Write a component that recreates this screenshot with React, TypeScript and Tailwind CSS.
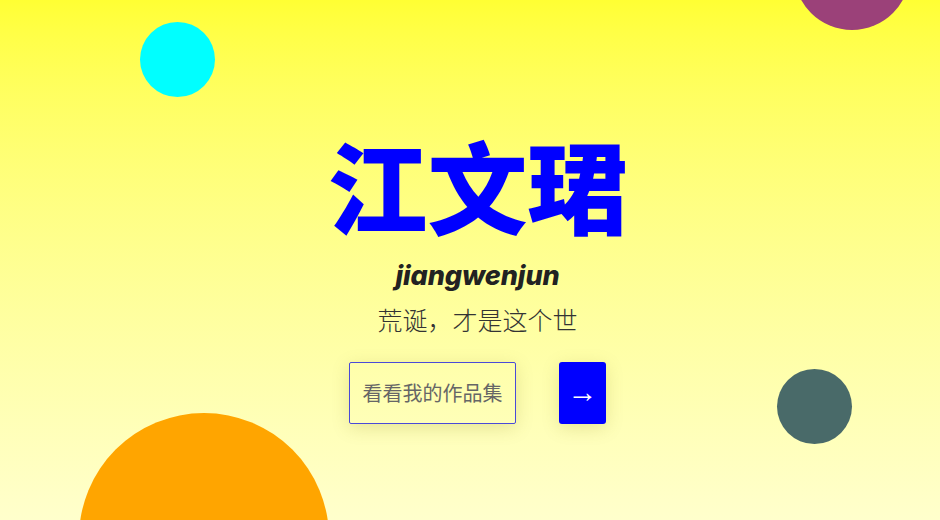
export default function App() {
  return (
    <div className="relative w-[940px] h-[520px] overflow-hidden bg-gradient-to-b from-[#ffff33] to-[#ffffcc] font-['Noto_Sans_CJK_SC',sans-serif]">
      {/* decorative circles */}
      <div className="absolute left-[140px] top-[22px] w-[75px] h-[75px] rounded-full bg-[#00ffff]" />
      <div className="absolute left-[794px] top-[-86px] w-[116px] h-[116px] rounded-full bg-[#9b4179]" />
      <div className="absolute left-[777px] top-[369px] w-[75px] h-[75px] rounded-full bg-[#496a69]" />
      <div className="absolute left-[79px] top-[413px] w-[250px] h-[250px] rounded-full bg-[#ffa500]" />

      <div className="relative flex flex-col items-center pt-[134px] pl-[15px]">
        <h1 className="text-[100px] leading-none font-black text-[#0000ff] font-['Noto_Sans_CJK_SC',sans-serif]">
          江文珺
        </h1>
        <p className="mt-[28px] text-[27px] leading-none font-extrabold italic text-[#222] font-['Inter',sans-serif] tracking-[-0.1px]">
          jiangwenjun
        </p>
        <p className="mt-[18px] text-[25px] leading-none font-light text-[#333] font-['Noto_Sans_CJK_SC',sans-serif]">
          荒诞，才是这个世
        </p>
        <div className="mt-[30px] flex items-center gap-[43px]">
          <button className="w-[167px] h-[62px] border border-[#4a4ad8] rounded-[2px] text-[20px] text-[#666] shadow-[0_4px_18px_rgba(120,110,0,0.18)] font-['Noto_Sans_CJK_SC',sans-serif]">
            看看我的作品集
          </button>
          <button className="w-[47px] h-[62px] rounded-[3px] bg-[#0000ff] text-white text-[30px] leading-none font-light pb-[3px] shadow-[0_4px_18px_rgba(120,110,0,0.18)] font-['Liberation_Sans',sans-serif]">
            →
          </button>
        </div>
      </div>
    </div>
  );
}
